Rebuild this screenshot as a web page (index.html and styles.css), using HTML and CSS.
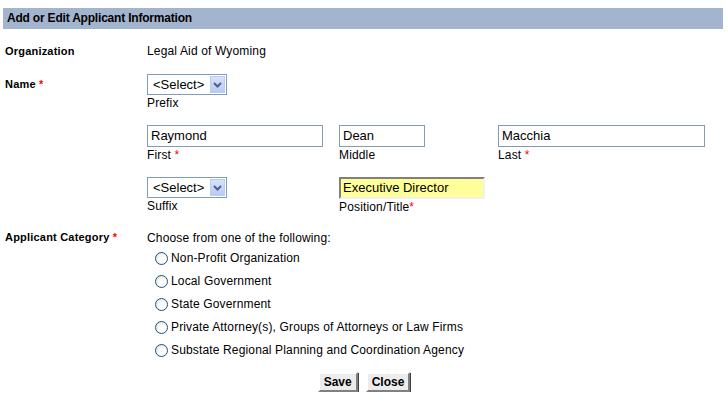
FILE: index.html
```html
<!DOCTYPE html>
<html>
<head>
<meta charset="utf-8">
<link rel="stylesheet" href="styles.css">
</head>
<body>
<div class="panel">
  <div class="header">Add or Edit Applicant Information</div>
  <div class="form">
    <div class="row row-org">
      <div class="label">Organization</div>
      <div class="value">Legal Aid of Wyoming</div>
    </div>
    <div class="row row-name">
      <div class="label">Name <span class="req">*</span></div>
      <div class="value">
        <div class="field">
          <div class="select"><span class="sel-text">&lt;Select&gt;</span><span class="sel-btn"><svg width="9" height="6" viewBox="0 0 9 6"><path d="M1 1 L4.5 4.5 L8 1" fill="none" stroke="#4d6185" stroke-width="2"/></svg></span></div>
          <div class="caption">Prefix</div>
        </div>
        <div class="name-grid">
          <div class="field">
            <div class="input w-first">Raymond</div>
            <div class="caption">First <span class="req">*</span></div>
          </div>
          <div class="field">
            <div class="input w-middle">Dean</div>
            <div class="caption">Middle</div>
          </div>
          <div class="field">
            <div class="input w-last">Macchia</div>
            <div class="caption">Last <span class="req">*</span></div>
          </div>
          <div class="field">
            <div class="select"><span class="sel-text">&lt;Select&gt;</span><span class="sel-btn"><svg width="9" height="6" viewBox="0 0 9 6"><path d="M1 1 L4.5 4.5 L8 1" fill="none" stroke="#4d6185" stroke-width="2"/></svg></span></div>
            <div class="caption">Suffix</div>
          </div>
          <div class="field">
            <div class="input input-hl">Executive Director</div>
            <div class="caption">Position/Title<span class="req">*</span></div>
          </div>
        </div>
      </div>
    </div>
    <div class="row row-cat">
      <div class="label">Applicant Category <span class="req">*</span></div>
      <div class="value">
        <div class="choose">Choose from one of the following:</div>
        <ul class="radios">
          <li><span class="radio"></span>Non-Profit Organization</li>
          <li><span class="radio"></span>Local Government</li>
          <li><span class="radio"></span>State Government</li>
          <li><span class="radio"></span>Private Attorney(s), Groups of Attorneys or Law Firms</li>
          <li><span class="radio"></span>Substate Regional Planning and Coordination Agency</li>
        </ul>
      </div>
    </div>
    <div class="buttons">
      <button class="btn btn-save">Save</button>
      <button class="btn btn-close">Close</button>
    </div>
  </div>
</div>
</body>
</html>
```

FILE: styles.css
```css
html, body {
  margin: 0;
  padding: 0;
  background: #ffffff;
}
body {
  font-family: "Liberation Sans", Arial, sans-serif;
  font-size: 12px;
  color: #000;
  padding: 8px 5px 0 3px;
}
.header {
  background: #a3b5ce;
  height: 21px;
  line-height: 21px;
  font-weight: bold;
  font-size: 12px;
  letter-spacing: -0.2px;
  padding-left: 4px;
}
.form {
  padding-left: 2px;
}
.row {
  display: flex;
}
.label {
  width: 142px;
  flex: none;
  font-weight: bold;
  font-size: 11px;
  letter-spacing: 0.2px;
}
.req {
  color: #ff0000;
  font-weight: normal;
}
.label .req { font-weight: bold; }
.value {
  flex: 1;
  letter-spacing: 0.15px;
}
.row-org {
  margin-top: 15px;
  line-height: 14px;
}
.row-name {
  margin-top: 16px;
}
.row-name .label {
  padding-top: 4px;
}
.select {
  display: inline-flex;
  align-items: center;
  box-sizing: border-box;
  width: 80px;
  height: 21px;
  border: 1px solid #7f9db9;
  padding: 1px;
  background: #fff;
  letter-spacing: 0;
}
.sel-text {
  flex: 1;
  padding-left: 4px;
  font-size: 13px;
}
.sel-btn {
  width: 15px;
  height: 17px;
  background: linear-gradient(#d6e2fb, #b7cbf5);
  border: 1px solid #b9cdf3;
  box-sizing: border-box;
  display: flex;
  align-items: center;
  justify-content: center;
}
.caption {
  line-height: 14px;
  margin-top: 1px;
}
.name-grid {
  display: grid;
  grid-template-columns: 192px 159px auto;
  row-gap: 15px;
  margin-top: 15px;
}
.input {
  box-sizing: border-box;
  height: 22px;
  border: 1px solid #7f9db9;
  font-size: 13px;
  line-height: 20px;
  padding-left: 3px;
  background: #fff;
  letter-spacing: 0;
}
.w-first { width: 176px; }
.w-middle { width: 86px; }
.w-last { width: 207px; }
.input-hl {
  width: 146px;
  background: #ffff99;
  border: 2px solid;
  border-color: #808080 #f0f0f0 #f0f0f0 #808080;
  line-height: 18px;
  padding-left: 2px;
}
.row-cat {
  margin-top: 17px;
}
.choose {
  line-height: 14px;
}
.radios {
  list-style: none;
  margin: 0;
  padding: 0 0 0 8px;
}
.radios li {
  display: flex;
  align-items: center;
  height: 23px;
  line-height: 23px;
}
.radios li:first-child { margin-top: 2px; }
.radio {
  display: inline-block;
  box-sizing: border-box;
  width: 13px;
  height: 13px;
  border-radius: 50%;
  border: 1px solid #1c5180;
  background: radial-gradient(circle at 65% 65%, #ffffff 30%, #dcdcd5 100%);
  margin-right: 3px;
}
.buttons {
  display: flex;
  justify-content: center;
  gap: 8px;
  margin-top: 10px;
}
.btn {
  font-family: "Liberation Sans", Arial, sans-serif;
  font-weight: bold;
  font-size: 12px;
  height: 20px;
  padding: 0 4px;
  background: #ececec;
  border: 2px solid;
  border-color: #ffffff #808080 #808080 #ffffff;
  box-shadow: 1px 1px 0 #404040;
  color: #000;
}
```
